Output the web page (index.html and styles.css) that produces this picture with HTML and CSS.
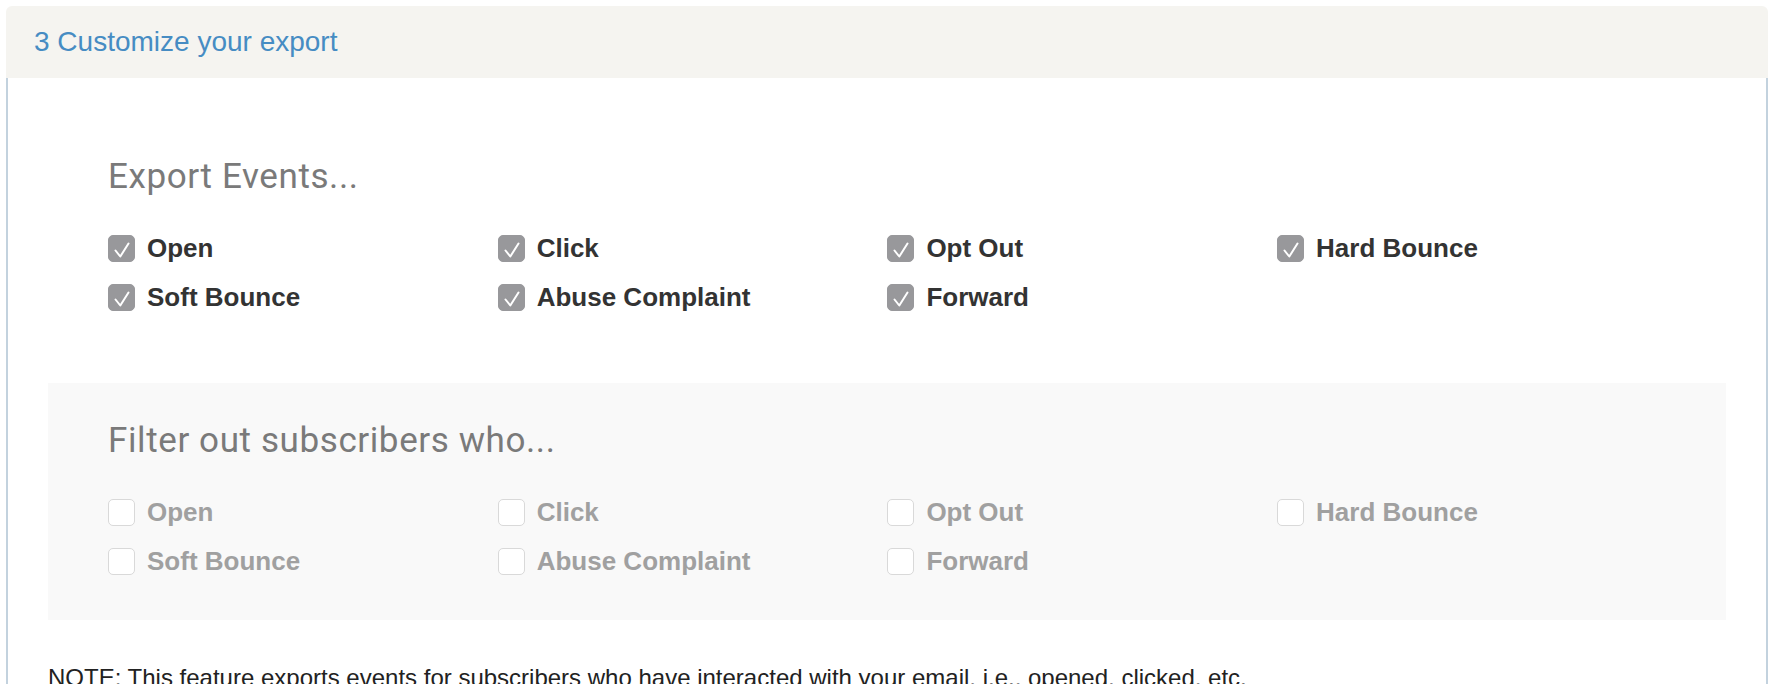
FILE: index.html
```html
<!DOCTYPE html>
<html>
<head>
<meta charset="utf-8">
<link rel="stylesheet" href="styles.css">
</head>
<body>
<div class="panel">
  <div class="panel-head">3 Customize your export</div>
  <div class="panel-body">
    <section class="group">
      <h2 class="group-title">Export Events...</h2>
      <div class="options">
        <label class="opt"><span class="box on"><svg viewBox="0 0 27 27"><path d="M7.5 15.5 L12.3 21.5 L20.5 8.5"/></svg></span>Open</label>
        <label class="opt"><span class="box on"><svg viewBox="0 0 27 27"><path d="M7.5 15.5 L12.3 21.5 L20.5 8.5"/></svg></span>Click</label>
        <label class="opt"><span class="box on"><svg viewBox="0 0 27 27"><path d="M7.5 15.5 L12.3 21.5 L20.5 8.5"/></svg></span>Opt Out</label>
        <label class="opt"><span class="box on"><svg viewBox="0 0 27 27"><path d="M7.5 15.5 L12.3 21.5 L20.5 8.5"/></svg></span>Hard Bounce</label>
        <label class="opt"><span class="box on"><svg viewBox="0 0 27 27"><path d="M7.5 15.5 L12.3 21.5 L20.5 8.5"/></svg></span>Soft Bounce</label>
        <label class="opt"><span class="box on"><svg viewBox="0 0 27 27"><path d="M7.5 15.5 L12.3 21.5 L20.5 8.5"/></svg></span>Abuse Complaint</label>
        <label class="opt"><span class="box on"><svg viewBox="0 0 27 27"><path d="M7.5 15.5 L12.3 21.5 L20.5 8.5"/></svg></span>Forward</label>
      </div>
    </section>
    <section class="group filter">
      <h2 class="group-title">Filter out subscribers who...</h2>
      <div class="options">
        <label class="opt off"><span class="box"></span>Open</label>
        <label class="opt off"><span class="box"></span>Click</label>
        <label class="opt off"><span class="box"></span>Opt Out</label>
        <label class="opt off"><span class="box"></span>Hard Bounce</label>
        <label class="opt off"><span class="box"></span>Soft Bounce</label>
        <label class="opt off"><span class="box"></span>Abuse Complaint</label>
        <label class="opt off"><span class="box"></span>Forward</label>
      </div>
    </section>
    <p class="note">NOTE: This feature exports events for subscribers who have interacted with your email, i.e., opened, clicked, etc.</p>
  </div>
</div>
</body>
</html>
```

FILE: styles.css
```css
html, body {
  margin: 0;
  padding: 0;
  background: #ffffff;
}
body {
  padding: 6px 8px 0 6px;
  font-family: "Liberation Sans", Arial, sans-serif;
}
.panel {
  display: flex;
  flex-direction: column;
}
.panel-head {
  height: 72px;
  line-height: 72px;
  background: #f5f4f0;
  border-radius: 6px 6px 0 0;
  padding-left: 28px;
  font-size: 28px;
  color: #468cc3;
}
.panel-body {
  border-left: 2px solid #c3d2de;
  border-right: 2px solid #c3d2de;
  padding: 79px 40px 20px 40px;
  display: flex;
  flex-direction: column;
}
.group {
  padding-left: 60px;
}
.group-title {
  margin: 0 0 27px 0;
  font-family: Roboto, "Noto Sans", sans-serif;
  font-weight: 400;
  font-size: 35px;
  line-height: 40px;
  color: #7a7a7a;
  letter-spacing: 0.6px;
}
.options {
  display: grid;
  grid-template-columns: repeat(4, 389.7px);
}
.opt {
  display: flex;
  align-items: center;
  gap: 12px;
  height: 49px;
  font-weight: bold;
  font-size: 26px;
  color: #333333;
}
.opt.off {
  color: #a0a0a0;
}
.box {
  width: 27px;
  height: 27px;
  box-sizing: border-box;
  border-radius: 5px;
  border: 1px solid #d9d9d9;
  background: #ffffff;
  flex: none;
  display: flex;
}
.box.on {
  background: #98989b;
  border-color: #98989b;
}
.box svg {
  width: 27px;
  height: 27px;
  margin: -1px;
}
.box svg path {
  fill: none;
  stroke: #ffffff;
  stroke-width: 2;
  stroke-linecap: round;
  stroke-linejoin: round;
}
.filter {
  margin-top: 61px;
  background: #f9f9f9;
  padding-top: 38px;
  padding-bottom: 34px;
}
.note {
  margin: 44px 0 0 0;
  font-size: 24px;
  line-height: 28px;
  color: #222222;
}
```
